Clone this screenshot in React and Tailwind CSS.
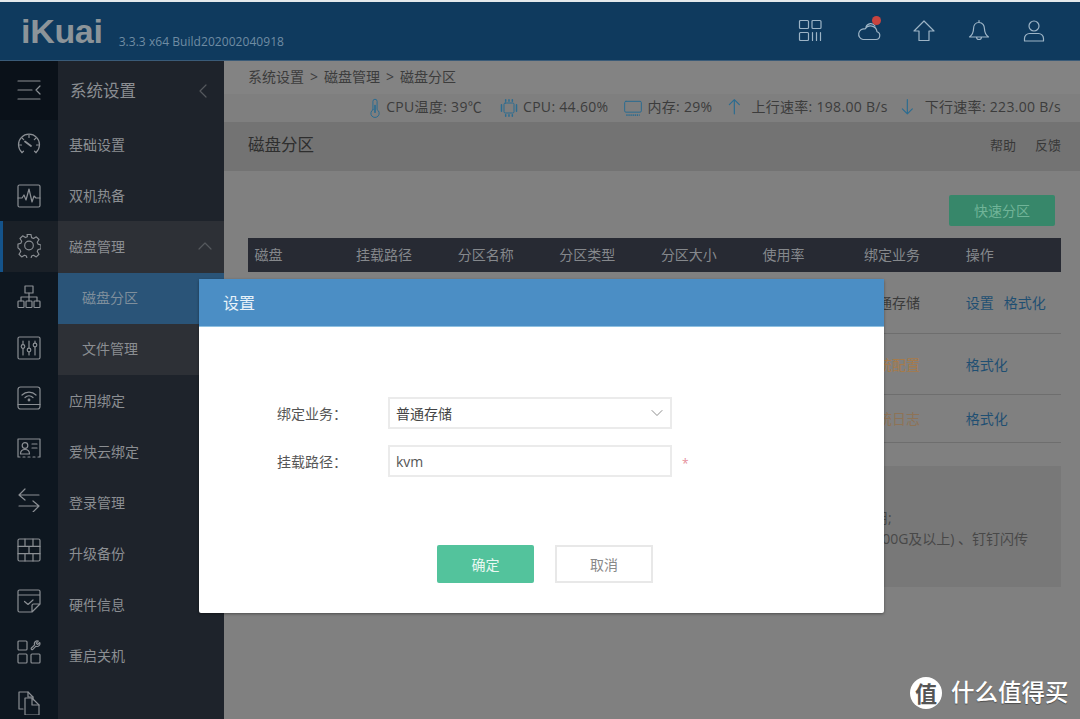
import { ChevronLeft, ChevronUp, ChevronDown } from 'lucide-react';

const FONT = '"Open Sans", "Noto Sans CJK SC", sans-serif';

function Ico({ children, size = 24, className = '' }) {
    return (
        <svg width={size} height={size} viewBox="0 0 24 24" fill="none" stroke="currentColor" strokeWidth="1.2" strokeLinecap="round" strokeLinejoin="round" className={className}>
            {children}
        </svg>
    );
}

const railIcons = [
    { key: 'gauge', svg: <><path d="M5 19.500a10.500 10.500 0 1 1 14 0" /><path d="M5 19.500l1.500-1.300M19 19.500l-1.500-1.300M12 2v2.500M2 12h2.500M19.500 12H22M5 5l1.700 1.700M19 5l-1.700 1.700" /><path d="M8 8.500l6 4.500" strokeWidth="1.800" /></> },
    { key: 'activity', svg: <><rect x="1" y="1" width="22" height="22" rx="1.500" /><path d="M1 14h4l2-3 2 5 3-11 3 13 2-6 2 2h4" /></> },
    { key: 'gear', open: true, svg: <path d="M10 1h4l.7 3.300 2 .9 2.900-1.800 2.800 2.800-1.800 2.900.9 2 3 .9v4l-3 .7-.9 2 1.800 2.900-2.800 2.800-2.900-1.800-2 .9-.7 2.800h-4l-.7-2.800-2-.9-2.900 1.800-2.800-2.800 1.800-2.900-.9-2L.5 15v-4l3-.9.900-2-1.800-2.900 2.800-2.800 2.900 1.800 2-.9zM12 8a4.500 4.500 0 1 0 0 9 4.500 4.500 0 0 0 0-9z" transform="scale(.96) translate(.5 -.5)" /> },
    { key: 'sitemap', svg: <><rect x="8" y="1" width="8" height="7" /><rect x="1" y="16" width="6" height="6.500" rx=".8" /><rect x="9" y="16" width="6" height="6.500" rx=".8" /><rect x="17" y="16" width="6" height="6.500" rx=".8" /><path d="M12 8v8M4 16v-4h16v4" /></> },
    { key: 'sliders', svg: <><rect x="1" y="1" width="22" height="22" rx="1.500" /><path d="M6 5v3.500M6 12.500V19M12 5v7M12 16v3M18 5v2M18 11v8" /><circle cx="6" cy="10.500" r="1.800" /><circle cx="12" cy="14" r="1.800" /><circle cx="18" cy="9" r="1.800" /></> },
    { key: 'wifi', svg: <><rect x="1" y="1" width="22" height="22" rx="2.500" /><path d="M1 18.500h22" /><path d="M5 9a10 10 0 0 1 14 0M8 11.500a6 6 0 0 1 8 0" /><circle cx="12" cy="14" r=".8" /></> },
    { key: 'idcard', svg: <><path d="M3 20H1V2h22v18h-2M6 20h2M11 20h2M16 20h2" /><circle cx="8" cy="8.500" r="2.800" /><path d="M3.500 17c0-3 2-4.500 4.500-4.500s4.500 1.500 4.500 4.500zM15 7h5M15 11h5" /></> },
    { key: 'arrows', svg: <><path d="M22 7H2l6-6M2 7l6 5" /><path d="M2 18h20l-6-5M22 18l-6 6" /></> },
    { key: 'wall', svg: <><rect x="1" y="1" width="22" height="22" rx="1.500" /><path d="M1 8.300h22M1 15.700h22M8 1v7.300M16 1v7.300M12 8.300v7.400M8 15.700V23M16 15.700V23" /></> },
    { key: 'calendar', svg: <><path d="M23 15V2.500A1.500 1.500 0 0 0 21.500 1h-19A1.500 1.500 0 0 0 1 2.500v19A1.500 1.500 0 0 0 2.500 23H15zM23 15h-6.500a1.500 1.500 0 0 0-1.500 1.500V23M1 6h22" /><path d="M7.500 12.500l3.500 3 5-4.500" /></> },
    { key: 'apps', svg: <><rect x="1" y="1" width="9" height="9" rx="1" /><rect x="1" y="14" width="9" height="9" rx="1" /><rect x="14" y="14" width="9" height="9" rx="1" /><g transform="translate(12.800 0) scale(.46)" strokeWidth="2.600"><path d="M14.700 6.300a1 1 0 0 0 0 1.400l1.600 1.600a1 1 0 0 0 1.400 0l3.770-3.770a6 6 0 0 1-7.940 7.940l-6.910 6.910a2.120 2.120 0 0 1-3-3l6.910-6.910a6 6 0 0 1 7.940-7.940l-3.760 3.760z" /></g></> },
    { key: 'files', svg: <><path d="M6 18H2V1h9l5 5v3" /><path d="M11 1v5h5" /><path d="M8 7h7l7 7v10H8z" /><path d="M15 7v7h7" /></> },
];

const menu = [
    { label: '基础设置' },
    { label: '双机热备' },
    { label: '磁盘管理', open: true },
    { label: '磁盘分区', sub: true, active: true },
    { label: '文件管理', sub: true },
    { label: '应用绑定' },
    { label: '爱快云绑定' },
    { label: '登录管理' },
    { label: '升级备份' },
    { label: '硬件信息' },
    { label: '重启关机' },
];

function MenuRow({ item }) {
    const labelBg = item.active ? 'bg-[#2a5478] text-[#7f8f9c]' : item.sub || item.open ? 'bg-[#2d3036]' : '';
    return (
        <div className={`h-[51.2px] flex items-center justify-between pr-[7px] pb-[1px] text-[14px] ${item.sub ? 'pl-[24px]' : 'pl-[11px]'} ${labelBg}`}>
            <span>{item.label}</span>
            {item.open && <ChevronUp className="w-[24px] h-[24px] text-[#55585d]" strokeWidth={1.2} />}
        </div>
    );
}

function Stat({ icon, text, className = '' }) {
    return (
        <div className={`flex items-center ${className}`}>
            <span className="text-[#2b6c91] flex">{icon}</span>
            <span className="tracking-[0.3px] pb-[3px]">{text}</span>
        </div>
    );
}

export default function App() {
    const ops = 'text-[#1f4f72]';
    const tableCols = 'grid grid-cols-[repeat(8,101.6px)] items-center pl-[6.5px]';
    return (
        <div className="relative w-[1080px] h-[719px] overflow-hidden flex flex-col bg-[#808080]" style={{ fontFamily: FONT }}>
            <div className="h-[2px] bg-[#e4e9ec]" />

            <header className="h-[59px] shrink-0 bg-[#0f3a5e] flex items-center pl-[21px] pr-[34px] border-b border-[#3a5b78]">
                <span className="text-[34px] leading-none font-bold text-[#8c9499] tracking-[-0.3px]" style={{ fontFamily: '"Liberation Sans", sans-serif' }}>iKuai</span>
                <span className="ml-[16px] mt-[21px] text-[12px] tracking-[0.05px] text-[#6f8ca3]">3.3.3 x64 Build202002040918</span>
                <div className="ml-auto flex items-center gap-[31px] text-[#9db4c6]">
                    <span className="flex mr-[4px]">
                        <Ico>
                            <rect x="1.500" y="1.500" width="9" height="8" rx="1" /><rect x="14" y="1.500" width="9" height="8" rx="1" /><rect x="1.500" y="13.500" width="9" height="8" rx="1" /><path d="M14.500 13.500v8M18.500 13.500v8M22.500 13.500v8" />
                        </Ico>
                    </span>
                    <div className="relative flex">
                        <Ico>
                            <path d="M6 20.500h13a4 4 0 0 0 1-7.800A6.500 6.500 0 0 0 8 10a5.300 5.300 0 0 0-2 10.500z" /><path d="M9 8a5 5 0 0 1 9-1" />
                        </Ico>
                        <span className="absolute -top-[3px] right-[0px] w-[9px] h-[9px] rounded-full bg-[#c9443f]" />
                    </div>
                    <Ico>
                        <path d="M12 2L2 12h5v9.500h10V12h5z" />
                    </Ico>
                    <Ico>
                        <path d="M12 1.500v2M12 3.500c-3.500 0-5.500 3-5.500 6.500 0 4-1.500 6-4 8h19c-2.500-2-4-4-4-8 0-3.500-2-6.500-5.500-6.500zM9.500 18a2.500 2.500 0 0 0 5 0" />
                    </Ico>
                    <Ico>
                        <circle cx="12" cy="7" r="5" /><path d="M2.500 22v-2.500c0-3 2.500-5 5-5h9c2.500 0 5 2 5 5V22z" />
                    </Ico>
                </div>
            </header>

            <div className="flex flex-1 min-h-0">
                <nav className="w-[58px] shrink-0 bg-[#0e1720] text-[#8b8f94]">
                    <div className="h-[58.6px] bg-[#0a1119] flex items-center justify-center">
                        <Ico>
                            <path d="M1 3h22M1 12h14M1 21h22M23 8l-4 4 4 4" />
                        </Ico>
                    </div>
                    {railIcons.map(r => (
                        <div key={r.key} className={`h-[50.700px] flex items-center justify-center ${r.open ? 'bg-[#1a2027] border-l-[3px] border-[#14538a] pr-[3px]' : ''}`}>
                            <Ico>{r.svg}</Ico>
                        </div>
                    ))}
                </nav>

                <aside className="w-[166px] shrink-0 text-[#8b8e92] bg-[#1e232b]">
                    <div className="h-[58px] flex items-center justify-between pl-[12px] pr-[9px] pt-[2px] text-[16.500px]">
                        <span>系统设置</span>
                        <ChevronLeft className="w-[24px] h-[24px] text-[#55585d]" strokeWidth={1.2} />
                    </div>
                    {menu.map(item => <MenuRow key={item.label} item={item} />)}
                </aside>

                <main className="flex-1 min-w-0 text-[14px] text-[#3c3c3c]">
                    <div className="h-[33px] bg-[#838383] pl-[24px] pb-[2px] flex items-center">
                        系统设置<span className="mx-[6px]">&gt;</span>磁盘管理<span className="mx-[6px]">&gt;</span>磁盘分区
                    </div>
                    <div className="h-[28px] bg-[#7f7f7f] pr-[19px] flex items-center justify-end">
                        <Stat text="CPU温度: 39℃" icon={<Ico size={20} className="mr-[1px]"><path d="M9.500 14V4a2.500 2.500 0 0 1 5 0v10a5 5 0 1 1-5 0z" /><path d="M12 9v8" strokeWidth="2" /></Ico>} />
                        <Stat className="ml-[17px]" text="CPU: 44.60%" icon={<Ico size={20} className="mr-[4px]"><rect x="6" y="6" width="12" height="12" rx="1.500" /><path d="M3 8v8M21 8v8M8 2v2M12 2v2M16 2v2M8 20v2M12 20v2M16 20v2" strokeWidth="1.800" /></Ico>} />
                        <Stat className="ml-[15px]" text="内存: 29%" icon={<Ico size={20} className="mr-[4px]"><rect x="2" y="4" width="20" height="13" rx="1.500" /><path d="M4 20.500h16" strokeWidth="2" strokeDasharray="1.500 1" strokeLinecap="butt" /></Ico>} />
                        <Stat className="ml-[14px]" text="上行速率: 198.00 B/s" icon={<Ico size={20} className="mr-[5px]"><path d="M10 19V2M4 8l6-6 6 6" strokeWidth="1.400" /></Ico>} />
                        <Stat className="ml-[11px]" text="下行速率: 223.00 B/s" icon={<Ico size={20} className="mr-[6px]"><path d="M10 2v17M4 13l6 6 6-6" strokeWidth="1.400" /></Ico>} />
                    </div>
                    <div className="h-[49px] bg-[#737373] pl-[24px] pr-[19px] pb-[2px] flex items-center justify-between">
                        <span className="text-[16.500px] text-[#2e2e2e]">磁盘分区</span>
                        <div className="flex gap-[19px] text-[13px] text-[#383838]">
                            <span>帮助</span>
                            <span>反馈</span>
                        </div>
                    </div>

                    <section className="pl-[24px] pr-[19px] pt-[24px]">
                        <div className="flex justify-end pr-[6px]">
                            <button className="w-[106px] h-[31px] rounded-[2px] bg-[#37876a] text-[#71b498] text-[14px]">快速分区</button>
                        </div>
                        <div className={`mt-[12px] h-[34px] bg-[#272a33] pb-[1px] text-[#85888c] ${tableCols}`}>
                            {['磁盘', '挂载路径', '分区名称', '分区类型', '分区大小', '使用率', '绑定业务', '操作'].map(c => <span key={c}>{c}</span>)}
                        </div>
                        <div className={`h-[62px] border-b border-[#6e6e6e] ${tableCols}`}>
                            <span className="col-start-7 text-[#3a3a3a]">普通存储</span>
                            <span className={`whitespace-nowrap ${ops}`}>设置<span className="ml-[10px]">格式化</span></span>
                        </div>
                        <div className={`h-[61px] border-b border-[#6e6e6e] ${tableCols}`}>
                            <span className="col-start-7 text-[#a67b4a]">系统配置</span>
                            <span className={ops}>格式化</span>
                        </div>
                        <div className={`h-[48px] border-b border-[#6e6e6e] ${tableCols}`}>
                            <span className="col-start-7 text-[#8e7356]">系统日志</span>
                            <span className={ops}>格式化</span>
                        </div>
                        <div className="mt-[23px] h-[121px] bg-[#787878] pt-[41px] pl-[570px] text-[#484848] whitespace-nowrap leading-[21px]">
                            <div>绑定为作用;</div>
                            <div className="-ml-[4px]">小米路由(100G及以上) 、钉钉闪传</div>
                        </div>
                    </section>
                </main>
            </div>

            <div className="absolute left-[199px] top-[279px] w-[685px] h-[334px] bg-white rounded-[2px] shadow-[0_1px_3px_rgba(0,0,0,0.4)]">
                <div className="h-[48px] bg-[#4b8ec5] pl-[24px] flex items-center text-[16px] text-[#e8f2f9] border-b border-[#8fc0e0]">设置</div>
                <div className="pl-[78px] pt-[70px] text-[14px] text-[#555]">
                    <div className="flex items-center">
                        <label className="w-[111px]">绑定业务：</label>
                        <div className="w-[284px] h-[32px] border-2 border-[#ebebeb] flex items-center justify-between pl-[6px] pr-[3px] text-[#444]">
                            普通存储
                            <ChevronDown className="w-[20px] h-[20px] text-[#777]" strokeWidth={1} />
                        </div>
                    </div>
                    <div className="flex items-center mt-[16px]">
                        <label className="w-[111px]">挂载路径：</label>
                        <input readOnly value="kvm" className="w-[284px] h-[32px] border-2 border-[#ebebeb] pl-[6px] text-[14px] text-[#555] outline-none" />
                        <span className="ml-[10px] mt-[5px] text-[12px] text-[#e58f9b]">*</span>
                    </div>
                    <div className="flex mt-[68px] ml-[160px] gap-[21px]">
                        <button className="w-[97px] h-[38px] rounded-[2px] bg-[#53c39c] text-[#e9f8f2]">确定</button>
                        <button className="w-[98px] h-[38px] border-2 border-[#e8e8e8] text-[#888]">取消</button>
                    </div>
                </div>
            </div>

            <div className="absolute left-[910px] top-[677px] flex items-center gap-[9px] text-white">
                <span className="w-[32px] h-[32px] rounded-full bg-white text-[#555] text-[22px] font-bold flex items-center justify-center">值</span>
                <span className="text-[23.500px] font-medium leading-none [text-shadow:0_1px_1px_rgba(0,0,0,0.4)]">什么值得买</span>
            </div>
        </div>
    );
}
